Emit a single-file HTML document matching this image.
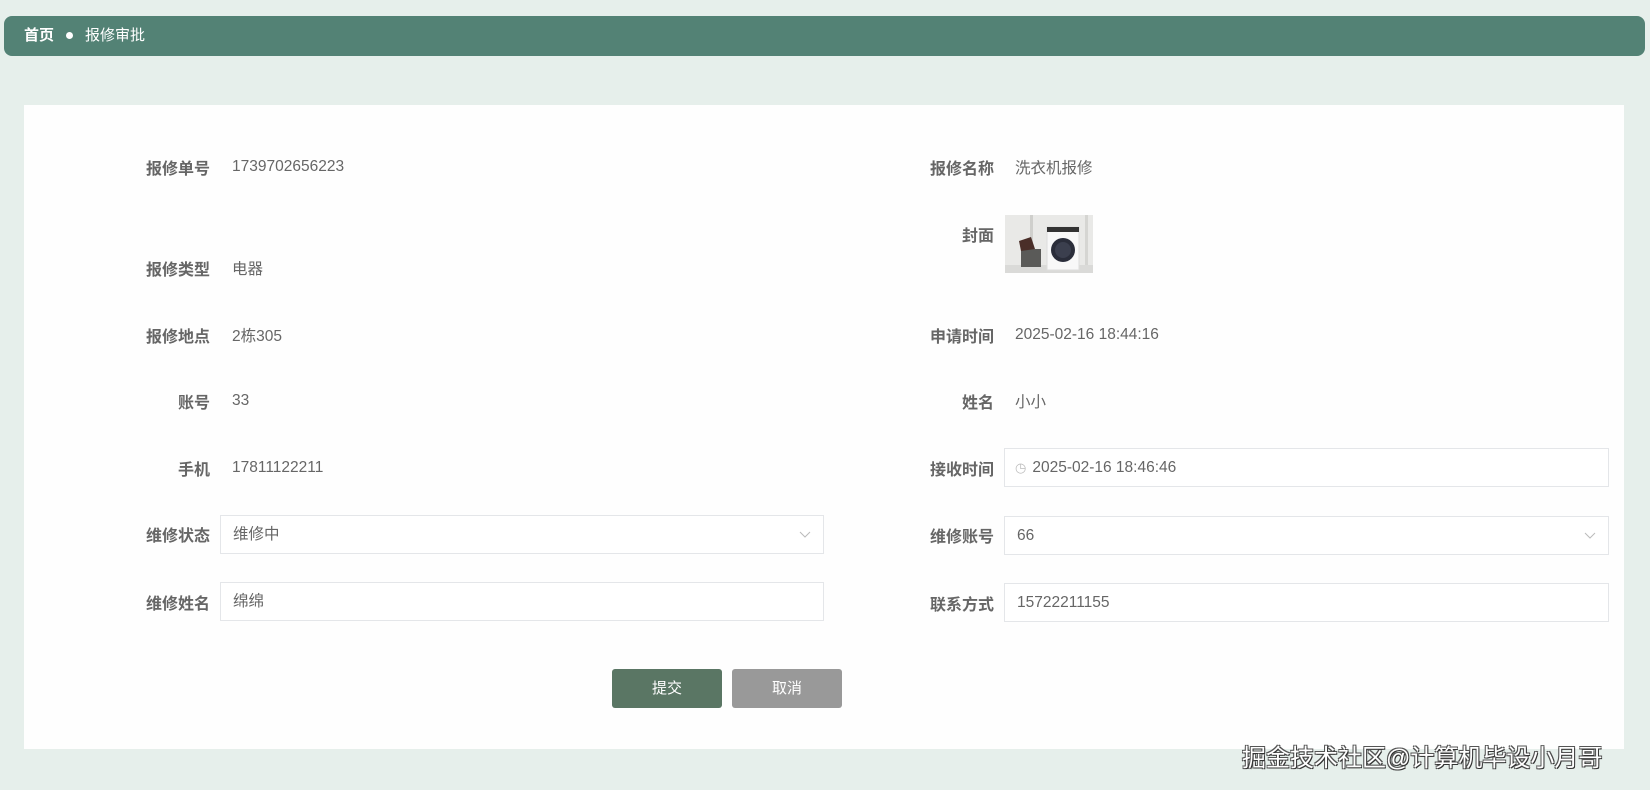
<!DOCTYPE html>
<html><head><meta charset="utf-8"><style>
*{margin:0;padding:0;box-sizing:border-box}
body{width:1650px;height:790px;background:#e6efeb;font-family:"Liberation Sans","Noto Sans CJK SC",sans-serif;position:relative;overflow:hidden}
.bar{position:absolute;left:4px;top:16px;width:1641px;height:40px;background:#538275;border-radius:8px;color:#fff;font-size:15px;line-height:40px;padding-left:20px}
.bar b{font-weight:bold}
.bar .dot{display:inline-block;width:7px;height:7px;border-radius:50%;background:#fff;margin:0 12px 2px 12px;vertical-align:middle}
.panel{position:absolute;left:24px;top:105px;width:1600px;height:644px;background:#fefefe}
.lb{position:absolute;width:120px;text-align:right;font-size:16px;font-weight:bold;color:#666;transform:translateY(-50%)}
.v{position:absolute;font-size:15.5px;color:#666;transform:translateY(-50%)}
.in{position:absolute;height:39px;border:1px solid #e4e6e9;background:#fff;font-size:15.5px;color:#666;line-height:37px;padding-left:12px}
.btn{position:absolute;top:669px;width:110px;height:39px;border-radius:3px;color:#fff;font-size:15px;text-align:center;line-height:39px}
.wm{position:absolute;left:1242px;top:738px;font-size:24px;color:#fff;text-shadow:1px 1px 0 #333,-1px -1px 0 #555,1px -1px 0 #555,-1px 1px 0 #555;white-space:nowrap}
</style></head><body>
<div class="bar"><b>首页</b><span class="dot"></span>报修审批</div>
<div class="panel"></div>

<div class="lb" style="left:90px;top:167px">报修单号</div><div class="v" style="left:232px;top:167px">1739702656223</div>
<div class="lb" style="left:874px;top:167px">报修名称</div><div class="v" style="left:1015px;top:167px">洗衣机报修</div>
<div class="lb" style="left:874px;top:234px">封面</div>
<svg style="position:absolute;left:1005px;top:215px" width="88" height="58" viewBox="0 0 88 58">
<rect width="88" height="58" fill="#e9e9e7"/><rect x="25" y="0" width="3" height="58" fill="#cfcfcc"/><rect x="80" y="0" width="3" height="58" fill="#d5d5d2"/>
<rect x="0" y="50" width="88" height="8" fill="#dadad8"/>
<rect x="42" y="12" width="32" height="43" fill="#f8f8f8" stroke="#ddd"/><rect x="42" y="12" width="32" height="5" fill="#333"/>
<circle cx="58" cy="35" r="12" fill="#2a2d3a"/><circle cx="58" cy="35" r="8" fill="#3b3f4e"/>
<rect x="16" y="34" width="20" height="18" fill="#5a5a58"/><path d="M14 26 L26 22 L30 34 L16 36Z" fill="#4a2e28"/>
</svg>
<div class="lb" style="left:90px;top:268px">报修类型</div><div class="v" style="left:232px;top:268px">电器</div>
<div class="lb" style="left:90px;top:335px">报修地点</div><div class="v" style="left:232px;top:335px">2栋305</div>
<div class="lb" style="left:874px;top:335px">申请时间</div><div class="v" style="left:1015px;top:335px">2025-02-16 18:44:16</div>
<div class="lb" style="left:90px;top:401px">账号</div><div class="v" style="left:232px;top:401px">33</div>
<div class="lb" style="left:874px;top:401px">姓名</div><div class="v" style="left:1015px;top:401px">小小</div>
<div class="lb" style="left:90px;top:468px">手机</div><div class="v" style="left:232px;top:468px">17811122211</div>
<div class="lb" style="left:874px;top:468px">接收时间</div>
<div class="in" style="left:1004px;top:448px;width:605px;padding-left:10px"><span style="color:#bbb;font-size:13px;margin-right:6px">&#9719;</span>2025-02-16 18:46:46</div>
<div class="lb" style="left:90px;top:534px">维修状态</div>
<div class="in" style="left:220px;top:515px;width:604px">维修中<svg style="position:absolute;right:12px;top:15px" width="12" height="8"><path d="M1 1 L6 6 L11 1" stroke="#bbb" fill="none"/></svg></div>
<div class="lb" style="left:874px;top:535px">维修账号</div>
<div class="in" style="left:1004px;top:516px;width:605px">66<svg style="position:absolute;right:12px;top:15px" width="12" height="8"><path d="M1 1 L6 6 L11 1" stroke="#bbb" fill="none"/></svg></div>
<div class="lb" style="left:90px;top:602px">维修姓名</div>
<div class="in" style="left:220px;top:582px;width:604px">绵绵</div>
<div class="lb" style="left:874px;top:603px">联系方式</div>
<div class="in" style="left:1004px;top:583px;width:605px">15722211155</div>
<div class="btn" style="left:612px;background:#5a7664">提交</div>
<div class="btn" style="left:732px;background:#999">取消</div>
<div class="wm">掘金技术社区@计算机毕设小月哥</div>
</body></html>
